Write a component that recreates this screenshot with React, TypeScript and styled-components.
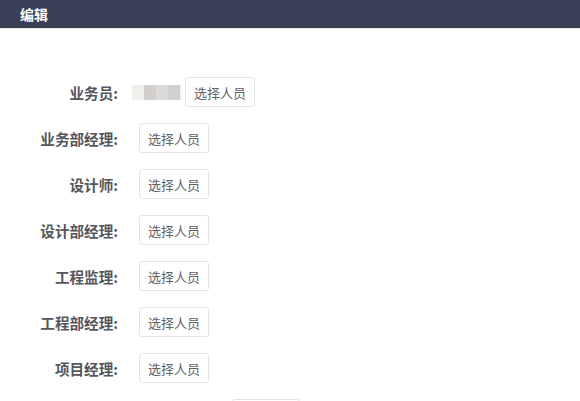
import React from 'react';
import styled, { createGlobalStyle } from 'styled-components';

const GlobalStyle = createGlobalStyle`
  html, body {
    margin: 0;
    padding: 0;
    background: #fff;
    overflow: hidden;
    font-family: "Noto Sans CJK SC", "Liberation Sans", sans-serif;
  }
`;

interface Role {
  label: string;
  hasName?: boolean;
}

const roles: Role[] = [
  { label: '业务员:', hasName: true },
  { label: '业务部经理:' },
  { label: '设计师:' },
  { label: '设计部经理:' },
  { label: '工程监理:' },
  { label: '工程部经理:' },
  { label: '项目经理:' },
];

const Page = styled.div`
  width: 580px;
  height: 401px;
  overflow: hidden;
`;

const Header = styled.div`
  height: 28px;
  background-color: #394056;
  border-bottom: 1px solid #e4e4de;
  display: flex;
  align-items: center;
  padding-left: 20px;
  color: #fff;
  font-size: 14px;
  font-weight: bold;
`;

const Form = styled.div`
  padding-top: 48px;
  display: flex;
  flex-direction: column;
  gap: 16px;
`;

const Row = styled.div`
  display: flex;
  align-items: center;
  height: 30px;
`;

const Label = styled.div`
  width: 118px;
  text-align: right;
  font-size: 14.6px;
  font-weight: bold;
  color: #55575c;
  padding-right: 14px;
`;

const Content = styled.div<{ $offset: number }>`
  display: flex;
  align-items: center;
  padding-left: ${(p) => p.$offset}px;
`;

const Mosaic = styled.div`
  display: flex;
  height: 15px;
  margin-right: 3px;
`;

const Tile = styled.span<{ $color: string; $width?: number }>`
  width: ${(p) => p.$width ?? 12}px;
  height: 15px;
  background-color: ${(p) => p.$color};
`;

const PickButton = styled.button`
  width: 70px;
  height: 30px;
  box-sizing: border-box;
  border: 1px solid #e2e4e8;
  border-radius: 3px;
  background: #fff;
  color: #606266;
  font-family: inherit;
  font-size: 13px;
  padding: 0;
  cursor: pointer;
`;

const Footer = styled.div`
  display: flex;
  padding-left: 232px;
`;

const SaveButton = styled(PickButton)`
  width: 68px;
  height: 32px;
`;

const mosaicColors = ['#efefeb', '#d2cfca', '#dadada', '#d0d0d0'];

export default function App() {
  return (
    <Page>
      <GlobalStyle />
      <Header>编辑</Header>
      <Form>
        {roles.map((role) => (
          <Row key={role.label}>
            <Label>{role.label}</Label>
            <Content $offset={role.hasName ? 0 : 7}>
              {role.hasName && (
                <Mosaic>
                  {mosaicColors.map((c, i) => (
                    <Tile key={i} $color={c} />
                  ))}
                  <Tile $color="#f4f4f2" $width={2} />
                </Mosaic>
              )}
              <PickButton>选择人员</PickButton>
            </Content>
          </Row>
        ))}
        <Footer>
          <SaveButton aria-label="保存" />
        </Footer>
      </Form>
    </Page>
  );
}
